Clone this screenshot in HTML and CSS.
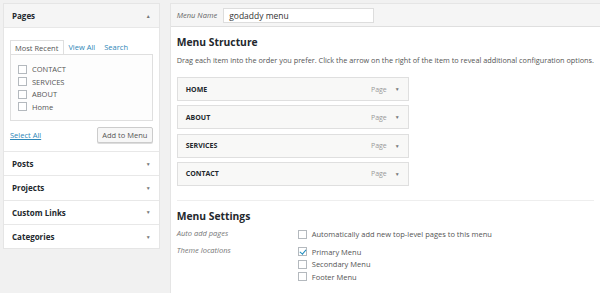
FILE: index.html
```html
<!DOCTYPE html>
<html lang="en">
<head>
    <meta charset="UTF-8">
    <title>Menus</title>
    <link rel="stylesheet" href="styles.css">
</head>
<body>

    <div id="menus-page">

        <!-- left column: items you can add -->
        <div id="menu-sidebar">

            <div class="box-section open">
                <div class="box-head">
                    <span>Pages</span>
                    <span class="arrow">&#9650;</span>
                </div>
                <div class="box-body">
                    <ul class="tabs">
                        <li class="tab active">Most Recent</li>
                        <li class="tab">View All</li>
                        <li class="tab">Search</li>
                    </ul>
                    <ul class="tab-panel">
                        <li><span class="check"></span>CONTACT</li>
                        <li><span class="check"></span>SERVICES</li>
                        <li><span class="check"></span>ABOUT</li>
                        <li><span class="check"></span>Home</li>
                    </ul>
                    <div class="box-actions">
                        <a class="select-all">Select All</a>
                        <button class="add-button" type="button">Add to Menu</button>
                    </div>
                </div>
            </div>

            <div class="box-section">
                <div class="box-head"><span>Posts</span><span class="arrow">&#9660;</span></div>
            </div>
            <div class="box-section">
                <div class="box-head"><span>Projects</span><span class="arrow">&#9660;</span></div>
            </div>
            <div class="box-section">
                <div class="box-head"><span>Custom Links</span><span class="arrow">&#9660;</span></div>
            </div>
            <div class="box-section">
                <div class="box-head"><span>Categories</span><span class="arrow">&#9660;</span></div>
            </div>

        </div>

        <!-- right column: the menu itself -->
        <div id="menu-edit">

            <div class="menu-name-bar">
                <label>Menu Name</label>
                <div class="name-input">godaddy menu</div>
            </div>

            <div class="menu-body">
                <h3>Menu Structure</h3>
                <p class="hint">Drag each item into the order you prefer. Click the arrow on the right of the item to reveal additional configuration options.</p>

                <ul class="menu-items">
                    <li class="menu-item"><span class="item-title">HOME</span><span class="item-type">Page</span><span class="arrow">&#9660;</span></li>
                    <li class="menu-item"><span class="item-title">ABOUT</span><span class="item-type">Page</span><span class="arrow">&#9660;</span></li>
                    <li class="menu-item"><span class="item-title">SERVICES</span><span class="item-type">Page</span><span class="arrow">&#9660;</span></li>
                    <li class="menu-item"><span class="item-title">CONTACT</span><span class="item-type">Page</span><span class="arrow">&#9660;</span></li>
                </ul>

                <div class="menu-settings">
                    <h3>Menu Settings</h3>
                    <div class="setting-row">
                        <div class="setting-label">Auto add pages</div>
                        <div class="setting-options">
                            <div class="option"><span class="check"></span>Automatically add new top-level pages to this menu</div>
                        </div>
                    </div>
                    <div class="setting-row">
                        <div class="setting-label">Theme locations</div>
                        <div class="setting-options">
                            <div class="option"><span class="check checked"></span>Primary Menu</div>
                            <div class="option"><span class="check"></span>Secondary Menu</div>
                            <div class="option"><span class="check"></span>Footer Menu</div>
                        </div>
                    </div>
                </div>
            </div>

        </div>

    </div>

</body>
</html>
```

FILE: styles.css
```css
* {
    margin: 0px;
    padding: 0px;
    box-sizing: border-box;
}
html, body {
    width: 100%;
    height: 100%;
}
body {
    background-color: #f1f1f1;
    font-family: 'Open Sans', sans-serif;
    font-size: 8px;
    color: #555;
    overflow: hidden;
}
ul {
    list-style-type: none;
}
#menus-page {
    display: flex;
    align-items: flex-start;
    padding-top: 3px;
    padding-left: 3px;
}

/* left column */
#menu-sidebar {
    width: 157px;
    background-color: white;
    border: 1px solid #e5e5e5;
}
.box-section {
    border-top: 1px solid #e8e8e8;
}
.box-section:first-child {
    border-top: none;
}
.box-head {
    display: flex;
    justify-content: space-between;
    align-items: center;
    height: 23.3px;
    padding: 0 8px 0 8px;
    font-weight: bold;
    font-size: 8px;
    color: #23282d;
}
.open .box-head {
    height: 24px;
    background-color: #f5f5f5;
    border-bottom: 1px solid #e8e8e8;
}
.arrow {
    font-size: 5px;
    color: #777;
}
.box-body {
    padding: 12px 6px 8px 6px;
}
.tabs {
    display: flex;
    font-size: 7.5px;
}
.tab {
    padding: 2px 5px 2px 4px;
    color: #2e87b8;
    height: 14px;
}
.tab.active {
    color: #555;
    border: 1px solid #dfdfdf;
    border-bottom: none;
    background-color: white;
    margin-bottom: -1px;
    position: relative;
}
.tab-panel {
    border: 1px solid #dfdfdf;
    background-color: #fdfdfd;
    height: 67px;
    padding: 8px 7px;
    font-size: 7.5px;
}
.tab-panel li {
    display: flex;
    align-items: center;
    height: 12.5px;
}
.check {
    display: inline-block;
    width: 9px;
    height: 9px;
    border: 1px solid #b4b9be;
    background-color: white;
    margin-right: 5px;
    position: relative;
}
.check.checked::after {
    content: "";
    position: absolute;
    left: 2.5px;
    top: 0px;
    width: 2.5px;
    height: 5px;
    border-right: 1.5px solid #1e8cbe;
    border-bottom: 1.5px solid #1e8cbe;
    transform: rotate(40deg);
}
.box-actions {
    display: flex;
    justify-content: space-between;
    align-items: center;
    margin-top: 6px;
}
.select-all {
    color: #2e87b8;
    text-decoration: underline;
    font-size: 7.5px;
}
.add-button {
    width: 56px;
    height: 16px;
    font-family: 'Open Sans', sans-serif;
    font-size: 7.5px;
    color: #555;
    background-color: #f7f7f7;
    border: 1px solid #ccc;
    border-radius: 2px;
    box-shadow: 0 1px 0 #ddd;
}

/* right column */
#menu-edit {
    flex: 1;
    margin-left: 10px;
    border: 1px solid #e5e5e5;
    border-right: none;
}
.menu-name-bar {
    display: flex;
    align-items: center;
    height: 23px;
    padding-left: 6px;
    background-color: #f5f5f5;
    border-bottom: 1px solid #dfdfdf;
}
.menu-name-bar label {
    font-style: italic;
    font-size: 7.5px;
    color: #666;
    margin-right: 6px;
}
.name-input {
    width: 151px;
    height: 15px;
    background-color: white;
    border: 1px solid #ddd;
    font-size: 8.5px;
    color: #333;
    padding: 1px 5px;
}
.menu-body {
    background-color: white;
    padding: 8px 6px 20px 6px;
    height: 270px;
}
h3 {
    font-size: 10.3px;
    color: #23282d;
}
.hint {
    font-size: 7.3px;
    white-space: nowrap;
    margin-top: 6px;
}
.menu-items {
    margin-top: 12px;
    width: 232px;
}
.menu-item {
    display: flex;
    align-items: center;
    height: 24px;
    margin-bottom: 4.3px;
    padding: 0 8px 0 8px;
    border: 1px solid #dfdfdf;
    background-color: #f8f8f7;
}
.item-title {
    flex: 1;
    font-weight: bold;
    font-size: 7px;
    color: #23282d;
}
.item-type {
    font-size: 7px;
    color: #999;
    margin-right: 8px;
}
.menu-settings {
    margin-top: 14px;
    border-top: 1px solid #eee;
    padding-top: 8px;
}
.setting-row {
    display: flex;
    margin-top: 5px;
    font-size: 7.5px;
}
.setting-label {
    width: 121px;
    font-style: italic;
    color: #777;
}
.option {
    display: flex;
    align-items: center;
    height: 12.5px;
}
```
